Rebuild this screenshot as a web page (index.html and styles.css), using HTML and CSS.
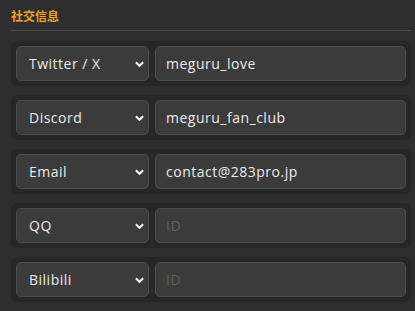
FILE: index.html
```html
<!DOCTYPE html>
<html lang="zh">
<head>
    <meta charset="UTF-8">
    <meta name="viewport" content="width=device-width, initial-scale=1.0">
    <title>社交信息</title>
    <link rel="stylesheet" href="styles.css">
</head>
<body>
    <section class="social">
        <h3 class="social-title">社交信息</h3>
        <div class="social-list">
            <div class="social-row">
                <div class="select-wrap">
                    <select class="platform">
                        <option selected>Twitter / X</option>
                        <option>Discord</option>
                        <option>Email</option>
                        <option>QQ</option>
                        <option>Bilibili</option>
                    </select>
                    <svg class="chevron" viewBox="0 0 10 6"><path d="M1 1l4 4 4-4"/></svg>
                </div>
                <input class="account" type="text" value="meguru_love" placeholder="ID">
            </div>
            <div class="social-row">
                <div class="select-wrap">
                    <select class="platform">
                        <option>Twitter / X</option>
                        <option selected>Discord</option>
                        <option>Email</option>
                        <option>QQ</option>
                        <option>Bilibili</option>
                    </select>
                    <svg class="chevron" viewBox="0 0 10 6"><path d="M1 1l4 4 4-4"/></svg>
                </div>
                <input class="account" type="text" value="meguru_fan_club" placeholder="ID">
            </div>
            <div class="social-row">
                <div class="select-wrap">
                    <select class="platform">
                        <option>Twitter / X</option>
                        <option>Discord</option>
                        <option selected>Email</option>
                        <option>QQ</option>
                        <option>Bilibili</option>
                    </select>
                    <svg class="chevron" viewBox="0 0 10 6"><path d="M1 1l4 4 4-4"/></svg>
                </div>
                <input class="account" type="text" value="contact@283pro.jp" placeholder="ID">
            </div>
            <div class="social-row">
                <div class="select-wrap">
                    <select class="platform">
                        <option>Twitter / X</option>
                        <option>Discord</option>
                        <option>Email</option>
                        <option selected>QQ</option>
                        <option>Bilibili</option>
                    </select>
                    <svg class="chevron" viewBox="0 0 10 6"><path d="M1 1l4 4 4-4"/></svg>
                </div>
                <input class="account" type="text" value="" placeholder="ID">
            </div>
            <div class="social-row">
                <div class="select-wrap">
                    <select class="platform">
                        <option>Twitter / X</option>
                        <option>Discord</option>
                        <option>Email</option>
                        <option>QQ</option>
                        <option selected>Bilibili</option>
                    </select>
                    <svg class="chevron" viewBox="0 0 10 6"><path d="M1 1l4 4 4-4"/></svg>
                </div>
                <input class="account" type="text" value="" placeholder="ID">
            </div>
        </div>
    </section>
</body>
</html>
```

FILE: styles.css
```css
body{
    margin: 0;
    background-color: #2e2e2e;
    font-family: "Open Sans", "Noto Sans CJK SC", sans-serif;
    color: #e6e6e6;
}
.social{
    padding: 7px 4px 0 11px;
}
.social-title{
    margin: 0;
    padding-bottom: 5px;
    font-size: 12px;
    font-weight: bold;
    color: #f2a51f;
    border-bottom: 1px solid #4a4a4a;
}
.social-list{
    display: flex;
    flex-direction: column;
    gap: 9px;
    margin-top: 10px;
}
.social-row{
    display: flex;
    gap: 6px;
    padding: 5px;
    background-color: #272727;
    border-radius: 6px;
}
.select-wrap{
    position: relative;
    width: 133px;
    flex-shrink: 0;
}
.platform, .account{
    box-sizing: border-box;
    height: 35px;
    background-color: #3b3b3b;
    border: 1px solid #4d4d4d;
    border-radius: 5px;
    color: #ececec;
    font-family: inherit;
    font-size: 14px;
    letter-spacing: 0.5px;
    outline: none;
}
.platform{
    appearance: none;
    -webkit-appearance: none;
    width: 100%;
    padding: 0 24px 0 12px;
}
.chevron{
    position: absolute;
    top: 15px;
    right: 5px;
    width: 9px;
    height: 6px;
    fill: none;
    stroke: #f0f0f0;
    stroke-width: 2.4;
    pointer-events: none;
}
.account{
    flex: 1;
    min-width: 0;
    padding: 0 10px;
}
.account::placeholder{
    color: #5f5f5f;
}
```
